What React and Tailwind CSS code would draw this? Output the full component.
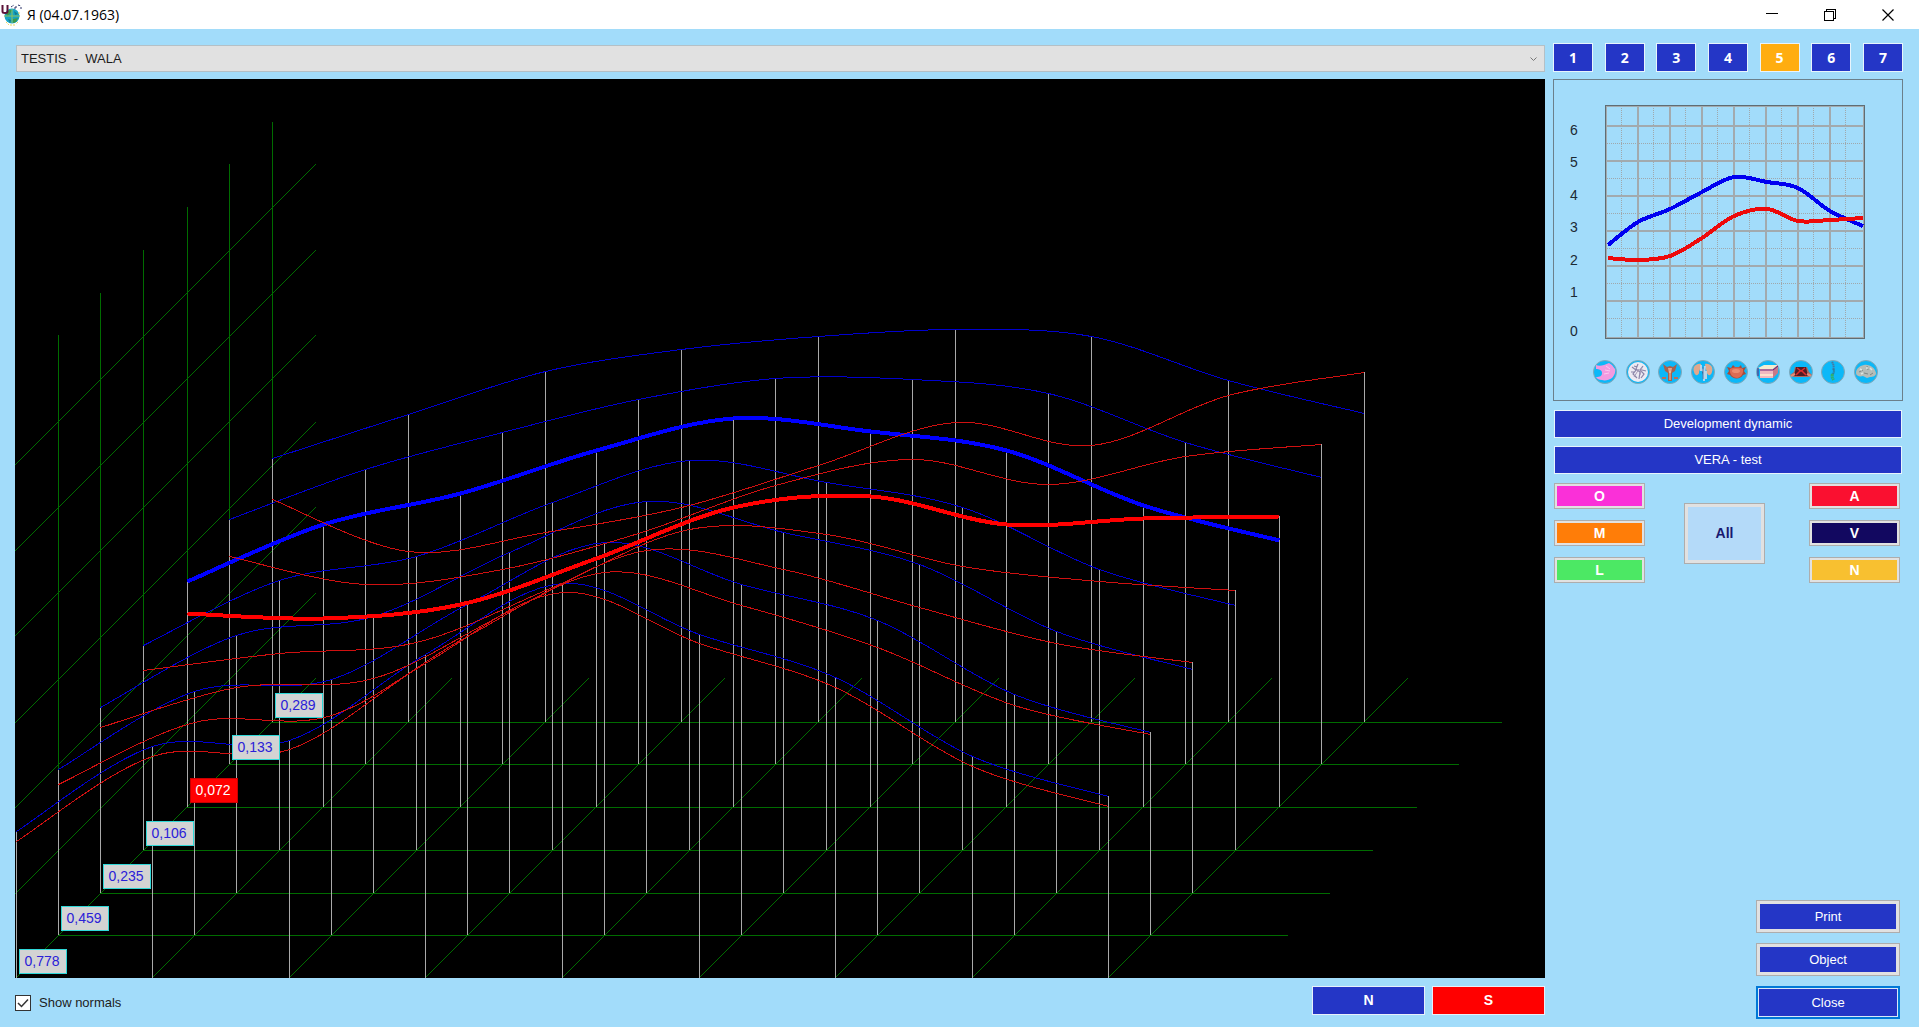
import React, { useState } from 'react';

const COLUMN_STEP = 136.6;

// front to back: origin of each layer, its coefficient and both curves (y of every column)
const layers = [
  { x: 16, y: 978, value: '0,778', blue: [831, 746, 740, 654, 583, 634, 677, 756, 796], red: [841, 756, 749, 663, 592, 643, 687, 766, 806] },
  { x: 58, y: 935, value: '0,459', blue: [769, 691, 679, 604, 542, 584, 620, 694, 732], red: [784, 722, 715, 636, 572, 605, 647, 705, 734] },
  { x: 100, y: 893, value: '0,235', blue: [707, 635, 616, 552, 501, 532, 564, 631, 669], red: [727, 687, 678, 611, 550, 569, 607, 643, 662] },
  { x: 143, y: 850, value: '0,106', blue: [645, 580, 556, 502, 460, 482, 507, 569, 605], red: [670, 653, 642, 587, 529, 534, 566, 581, 590] },
  { x: 187, y: 807, value: '0,072', active: true, blue: [581, 524, 493, 450, 418, 431, 450, 505, 540], red: [613, 618, 604, 558, 507, 496, 524, 518, 516] },
  { x: 229, y: 764, value: '0,133', blue: [519, 469, 432, 399, 378, 379, 393, 442, 477], red: [556, 584, 569, 533, 485, 459, 484, 456, 444] },
  { x: 272, y: 722, value: '0,289', blue: [458, 414, 371, 349, 336, 329, 336, 380, 413], red: [499, 551, 532, 507, 465, 422, 445, 395, 372] },
];

const wallLines = [164, 250, 335, 422, 507, 593, 678];

const smallBlue = [[1608, 245], [1638, 222], [1670, 209], [1702, 192], [1734, 177], [1767, 182], [1798, 188], [1830, 211], [1863, 226]];
const smallRed = [[1608, 258], [1638, 260], [1670, 256], [1702, 238], [1734, 216], [1767, 209], [1798, 221], [1830, 220], [1863, 218]];

const smallLabels = [['6', 130], ['5', 162], ['4', 195], ['3', 227], ['2', 260], ['1', 292], ['0', 331]];

// cardinal spline through all the points
const spline = (points) => {
  let d = `M${points[0][0]} ${points[0][1]}`;
  for (let i = 0; i < points.length - 1; i++) {
    const before = points[i - 1] || points[i];
    const from = points[i];
    const to = points[i + 1];
    const after = points[i + 2] || to;
    const c1 = [from[0] + (to[0] - before[0]) / 6, from[1] + (to[1] - before[1]) / 6];
    const c2 = [to[0] - (after[0] - from[0]) / 6, to[1] - (after[1] - from[1]) / 6];
    d += `C${c1[0]} ${c1[1]} ${c2[0]} ${c2[1]} ${to[0]} ${to[1]}`;
  }
  return d;
};

const columnX = (layer, i) => Math.floor(layer.x + i * COLUMN_STEP);

const layerPath = (layer, ys) => spline(ys.map((y, i) => [columnX(layer, i) + 0.5, y + 0.5]));

const AppIcon = () => (
  <svg width="22" height="22" viewBox="0 0 22 22" aria-hidden="true">
    <circle cx="11" cy="12" r="7.5" fill="#18a4c4" />
    <path d="M5 9l3-3h3l-2 4-3 2zM12 15l5-1-2 4-3 1z" fill="#3f9a4a" />
    <path d="M7 15l3 1-1 3zM13 7l4 3-3 1z" fill="#157a8e" />
    <path d="M3 12h16M11 5v14" stroke="#8fc25a" strokeWidth="1" />
    <path d="M5 18l3 3M9 21h5M17 18l-2 2M18 8v3" stroke="#e8d860" strokeWidth="1" strokeDasharray="2 1" />
    <path d="M1.500 1v6.500c0 2 5 2 5 0V1" fill="none" stroke="#5b1238" strokeWidth="2" />
    <path d="M10 3l3-2M14 3h2M17 1l3 1M13 4h3M19 4h2" stroke="#2a3166" strokeWidth="1" strokeDasharray="2 1" />
  </svg>
);

const PerspectiveChart = () => (
  <svg viewBox="15 79 1530 899" className="block w-full h-auto bg-black" shapeRendering="crispEdges" role="img" aria-label="Testis - Wala">
    <g stroke="#006c00" strokeWidth="1" fill="none">
      {layers.map((l, i) => (
        <path key={l.x} d={`M${l.x} ${l.y + 0.5}H${l.x + 1230}${i > 0 ? `M${l.x + 0.5} ${l.y - 600}V${l.y}` : ''}`} />
      ))}
      {wallLines.map((y) => <path key={y} d={`M316 ${y}L15 ${y + 301}`} />)}
      {layers[0].blue.slice(1).map((_, i) => (
        <path key={i} d={`M${columnX(layers[0], i + 1)} 978l300 -300`} />
      ))}
    </g>
    <g stroke="#a9a9a9" strokeWidth="1">
      {layers.map((l) => l.blue.map((y, i) => {
        const x = columnX(l, i) + 0.5;
        return <line key={`${l.x}-${i}`} x1={x} x2={x} y1={Math.min(y, l.red[i])} y2={l.y} />;
      }))}
    </g>
    <g fill="none">
      {layers.map((l) => (
        <g key={l.x} strokeWidth={l.active ? 4 : 1}>
          <path d={layerPath(l, l.blue)} stroke={l.active ? '#0000ff' : '#0000cd'} />
          <path d={layerPath(l, l.red)} stroke={l.active ? '#ff0000' : '#d01010'} />
        </g>
      ))}
    </g>
    <g fontFamily="'Liberation Sans', Arial, sans-serif" fontSize="14" textAnchor="middle">
      {layers.map((l) => (
        <g key={l.x}>
          <rect
            x={l.x + 3.5}
            y={l.y - 28.5}
            width="47"
            height="24"
            fill={l.active ? '#ff0000' : '#d3d3d3'}
            stroke={l.active ? '#c80000' : '#30d8d8'}
          />
          <text x={l.x + 26} y={l.y - 12} fill={l.active ? '#ffffff' : '#2a20d8'}>{l.value}</text>
        </g>
      ))}
    </g>
  </svg>
);

const SmallChart = () => (
  <svg viewBox="1554 80 348 264" className="block w-full h-auto" role="img" aria-label="Averages">
    <g shapeRendering="crispEdges" fill="none">
      <g stroke="#a0a8ac" strokeWidth="1" strokeDasharray="1 1">
        {[0, 1, 2, 3, 4, 5, 6, 7].map((i) => <line key={i} x1={1621.5 + i * 32} x2={1621.5 + i * 32} y1="108" y2="337" />)}
        {[0, 1, 2, 3, 4, 5].map((i) => <line key={i} x1="1607" x2="1863" y1={143.5 + i * 35} y2={143.5 + i * 35} />)}
      </g>
      <g stroke="#a2aaae" strokeWidth="2">
        {[0, 1, 2, 3, 4, 5, 6].map((i) => <line key={i} x1={1638 + i * 32} x2={1638 + i * 32} y1="107" y2="337" />)}
        {[0, 1, 2, 3, 4, 5].map((i) => <line key={i} x1="1607" x2="1863" y1={126 + i * 35} y2={126 + i * 35} />)}
      </g>
      <rect x="1606.5" y="106.5" width="257" height="231" stroke="#a2aaae" />
      <rect x="1605.5" y="105.5" width="259" height="233" stroke="#5f6d74" />
      <path d={spline(smallBlue)} stroke="#0000f0" strokeWidth="4" />
      <path d={spline(smallRed)} stroke="#ee0a0a" strokeWidth="4" />
    </g>
    <g fontFamily="'Liberation Sans', Arial, sans-serif" fontSize="14" fill="#1c2a33" textAnchor="middle">
      {smallLabels.map(([label, y]) => <text key={label} x="1574" y={y + 5}>{label}</text>)}
    </g>
  </svg>
);

const organs = [
  {
    name: 'Stomach',
    art: (
      <>
        <path d="M3 5c2 1 5 1 8 0l5-2 3 2 3 4c1 3-1 7-3 9-3 2-7 3-10 2-3 0-5-1-6-3 4 0 6-1 6-4S6 9 3 9z" fill="#f29ae0" />
        <path d="M13 6l4 3M12 10l5 1M11 14l5-1" stroke="#fbc9f0" strokeWidth="1" />
      </>
    ),
  },
  {
    name: 'Vessels',
    art: (
      <>
        <circle cx="12" cy="12" r="10" fill="#eceaf2" />
        <path d="M6 7l4 3-3 4 4 4M12 4l-2 5 4 3-1 7M17 6l-3 4 4 4-3 4M5 12h3M16 10l4 1M8 6l3 1" fill="none" stroke="#8a84a8" strokeWidth="1.200" />
        <path d="M8 17l5-8M14 15l2-8" stroke="#a89bb8" strokeWidth="1" />
      </>
    ),
  },
  {
    name: 'Urogenital',
    art: (
      <>
        <path d="M5 4l4 3 3-1 3 1 4-3-2 7-3 2v8h-4v-8l-3-2z" fill="#a8604c" />
        <path d="M10 8h4l-1 5h-2z" fill="#e0a48c" />
        <path d="M12 11v9" stroke="#f0c4a8" strokeWidth="1" />
        <path d="M4 17h4v2H4zM16 17h4v2h-4z" fill="#b8705c" />
      </>
    ),
  },
  {
    name: 'Kidneys',
    art: (
      <>
        <path d="M10 4c-5-1-9 3-7 8 1 4 4 4 5 1 0-3 2-4 2-9zM14 4c5-1 9 3 7 8-1 4-4 4-5 1 0-3-2-4-2-9z" fill="#e2a88c" />
        <path d="M10 5v6M11 9l2 3v9M14 6l-1 8M15 11v8" stroke="#b8d4e8" strokeWidth="2" />
        <path d="M12 7v12" stroke="#5878a8" strokeWidth="1" />
      </>
    ),
  },
  {
    name: 'Prostate',
    art: (
      <>
        <path d="M3 7l4 1 2-3 2 2h4l2-2 1 3 4-1-2 4 2 3-3 1c-2 4-10 5-13 0l-3-1 2-3z" fill="#a84c3c" />
        <path d="M6 9c3-2 10-2 13 0 1 5-3 9-6 9-4 0-8-4-7-9z" fill="#dc6c54" />
        <ellipse cx="12" cy="11" rx="4" ry="2" fill="#ec8c70" />
      </>
    ),
  },
  {
    name: 'Skin',
    art: (
      <>
        <path d="M2 8l6-3h14l-5 4H4z" fill="#f4ecd0" />
        <path d="M4 9h13v9H4z" fill="#f0b8c0" />
        <path d="M17 9l5-4v8l-5 5z" fill="#c87888" />
        <path d="M4 10h13l5-4M2 8v8" fill="none" stroke="#681c74" strokeWidth="1" />
        <path d="M4 15h13" stroke="#fce0cc" strokeWidth="2" />
      </>
    ),
  },
  {
    name: 'Thyroid',
    art: (
      <>
        <path d="M6 7h12l2 5 3 3-4 2H5l-4-2 4-3z" fill="#b0685c" />
        <path d="M7 7h10l2 9H5z" fill="#501c24" />
        <path d="M8 8l4 3 4-3M7 15l4-4M17 15l-4-4" fill="none" stroke="#e02c2c" strokeWidth="1.500" />
        <path d="M2 16l4-2M22 16l-4-2" stroke="#e08c78" strokeWidth="2" />
      </>
    ),
  },
  {
    name: 'Spine',
    art: (
      <>
        <path d="M11 2c2 3 2 6 1 8" fill="none" stroke="#4878a0" strokeWidth="2" strokeDasharray="1.500 .5" />
        <path d="M12.500 9c1 3 0 4-1 6" fill="none" stroke="#307c9c" strokeWidth="2" strokeDasharray="1.500 .5" />
        <path d="M11.500 14c-1 3 0 4 1 6" fill="none" stroke="#30b070" strokeWidth="3" strokeDasharray="2 .5" />
      </>
    ),
  },
  {
    name: 'Brain',
    art: (
      <>
        <path d="M2 13c0-4 3-7 8-8 6-1 11 3 12 8 0 3-3 4-6 4l-3 1-4-2c-3 1-7 0-7-3z" fill="#b4bcb8" />
        <path d="M5 12l4-2M13 6l1 4M10 13l4 1M16 15l3-2" fill="none" stroke="#7e8886" strokeWidth="1" />
        <path d="M6 9l2 1M12 8h2M16 8l2 2M7 14l2-1" stroke="#dce4e0" strokeWidth="1.500" />
      </>
    ),
  },
];

const OrganButton = ({ organ }) => (
  <button type="button" aria-label={organ.name} className="block">
    <svg width="24" height="24" viewBox="0 0 24 24" aria-hidden="true">
      <circle cx="12" cy="12" r="11.500" fill="#0cb8f8" stroke="#82a8b8" strokeWidth="1" />
      {organ.art}
    </svg>
  </button>
);

const ColorButton = ({ label, color }) => (
  <button type="button" className="w-[91px] h-[26px] border border-[#adadad] bg-[#e1e1e1] p-0.5">
    <span className={`flex h-full items-center justify-center text-[14px] font-bold text-white ${color}`}>{label}</span>
  </button>
);

const FramedButton = ({ children, focused }) => (
  <button
    type="button"
    className={`w-36 h-[33px] ${focused ? 'border-2 border-[#0078d7] bg-[#d8e8fa] p-px' : 'border border-[#adadad] bg-[#e1e1e1] p-[3px]'}`}
  >
    <span className="flex h-full items-center justify-center bg-[#2436c6] text-white">{children}</span>
  </button>
);

const App = () => {
  const [page, setPage] = useState(5);
  const [showNormals, setShowNormals] = useState(true);

  return (
    <div className="flex min-h-screen flex-col bg-[#a2dcfa] font-['Liberation_Sans',Arial,sans-serif] text-[13px] text-[#1c1c1c]">
      <header className="flex h-[29px] items-center bg-white pr-0.5 text-black">
        <span className="pl-px"><AppIcon /></span>
        <h1 className="flex-1 pl-1 font-['Open_Sans','Noto_Sans',sans-serif] text-[14px]">Я (04.07.1963)</h1>
        <button type="button" aria-label="Minimize" className="flex h-full w-[58px] items-center justify-center">
          <svg width="12" height="12" viewBox="0 0 12 12" shapeRendering="crispEdges"><path d="M0 4.500h12" stroke="#000" /></svg>
        </button>
        <button type="button" aria-label="Restore" className="flex h-full w-[58px] items-center justify-center">
          <svg width="12" height="12" viewBox="0 0 12 12" shapeRendering="crispEdges" fill="none" stroke="#000">
            <path d="M.5 2.500h9v9h-9zM2.500 2.500v-2h9v9h-2" />
          </svg>
        </button>
        <button type="button" aria-label="Close window" className="flex h-full w-[58px] items-center justify-center">
          <svg width="12" height="12" viewBox="0 0 12 12"><path d="M.5 .5l11 11M11.500 .5l-11 11" stroke="#000" strokeWidth="1.200" /></svg>
        </button>
      </header>

      <div className="flex flex-1 gap-2 pl-[15px] pr-4">
        <main className="flex min-w-0 flex-1 flex-col pt-4">
          <div className="relative ml-px">
            <select
              aria-label="Preparation"
              className="block h-[27px] w-full appearance-none border border-[#b4c0c6] bg-[#e1e1e1] px-1"
            >
              <option>{'TESTIS\u00a0 -\u00a0 WALA'}</option>
            </select>
            <svg className="pointer-events-none absolute right-2 top-3" width="7" height="5" viewBox="0 0 7 5" fill="none" stroke="#777">
              <path d="M.5 .5l3 3 3-3" />
            </svg>
          </div>
          <div className="pt-[7px]">
            <PerspectiveChart />
          </div>
          <div className="flex items-center justify-between pt-2">
            <label className="flex items-center gap-2 pt-1">
              <span className="relative block h-4 w-4">
                <input
                  type="checkbox"
                  checked={showNormals}
                  onChange={(e) => setShowNormals(e.target.checked)}
                  className="peer block h-4 w-4 appearance-none border border-[#333] bg-white"
                />
                <svg className="pointer-events-none absolute inset-0 hidden peer-checked:block" width="16" height="16" viewBox="0 0 16 16" fill="none" stroke="#333" strokeWidth="1.500">
                  <path d="M3 8l3.500 3.500L13 4.500" />
                </svg>
              </span>
              Show normals
            </label>
            <div className="flex gap-[7px] text-[14px] font-bold text-white">
              <button type="button" className="h-[29px] w-[113px] border border-[#e8f0fa] bg-[#2436c6]">N</button>
              <button type="button" className="h-[29px] w-[113px] border border-[#e8f0fa] bg-[#ff0000]">S</button>
            </div>
          </div>
        </main>

        <aside className="flex w-[350px] shrink-0 flex-col pt-3.5 pb-2">
          <div className="flex justify-between">
            {[1, 2, 3, 4, 5, 6, 7].map((n) => (
              <button
                key={n}
                type="button"
                onClick={() => setPage(n)}
                className={`h-[29px] w-10 border border-[#e8f4fc] font-['Noto_Sans','Open_Sans',sans-serif] text-[14px] font-bold text-white ${page === n ? 'bg-[#ffad10]' : 'bg-[#2436c6]'}`}
              >
                {n}
              </button>
            ))}
          </div>

          <section className="mt-[7px] border border-[#6b7f8a] pb-4">
            <SmallChart />
            <div className="flex justify-between pl-[39px] pr-6 pt-4">
              {organs.map((organ) => <OrganButton key={organ.name} organ={organ} />)}
            </div>
          </section>

          <div className="flex flex-col gap-2 px-px pt-[9px]">
            <button type="button" className="h-7 border border-[#e8f4fc] bg-[#2436c6] text-white">Development dynamic</button>
            <button type="button" className="h-7 border border-[#e8f4fc] bg-[#2436c6] text-white">VERA - test</button>
          </div>

          <div className="flex items-center pl-px pr-[3px] pt-[9px]">
            <div className="flex flex-col gap-[11px]">
              <ColorButton label="O" color="bg-[#fa30d8]" />
              <ColorButton label="M" color="bg-[#ff7d08]" />
              <ColorButton label="L" color="bg-[#4ce864]" />
            </div>
            <button type="button" className="ml-[39px] h-[61px] w-[81px] border border-[#adadad] bg-[#e1e1e1] p-[3px]">
              <span className="flex h-full items-center justify-center bg-[#b4daf9] text-[14px] font-bold text-[#191970]">All</span>
            </button>
            <div className="ml-auto flex flex-col gap-[11px]">
              <ColorButton label="A" color="bg-[#fa1030]" />
              <ColorButton label="V" color="bg-[#120860]" />
              <ColorButton label="N" color="bg-[#f8c030]" />
            </div>
          </div>

          <div className="mt-auto flex flex-col items-end gap-2.5 pr-[3px]">
            <FramedButton>Print</FramedButton>
            <FramedButton>Object</FramedButton>
            <FramedButton focused>Close</FramedButton>
          </div>
        </aside>
      </div>
    </div>
  );
};

export default App;
